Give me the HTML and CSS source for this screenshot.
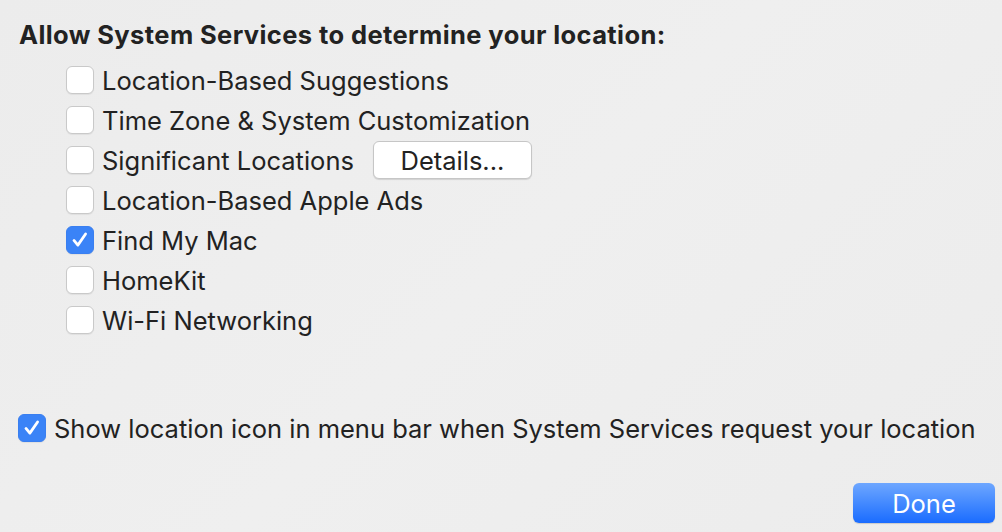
FILE: index.html
```html
<!DOCTYPE html>
<html lang="en">
<head>
  <title>System Services</title>
  <meta charset="utf-8">
  <link rel="stylesheet" href="styles.css">
</head>
<body>
  <div class="sheet">
    <h1 class="sheet-title">Allow System Services to determine your location:</h1>
    <ul class="service-list">
      <li class="service-row"><span class="check"></span>Location-Based Suggestions</li>
      <li class="service-row"><span class="check"></span>Time Zone &amp; System Customization</li>
      <li class="service-row"><span class="check"></span>Significant Locations<button class="push-button" type="button">Details...</button></li>
      <li class="service-row"><span class="check"></span>Location-Based Apple Ads</li>
      <li class="service-row"><span class="check checked"><svg viewBox="0 0 28 28"><path d="M7.5 14.5l4.2 5 8.3-12" /></svg></span>Find My Mac</li>
      <li class="service-row"><span class="check"></span>HomeKit</li>
      <li class="service-row"><span class="check"></span>Wi-Fi Networking</li>
    </ul>
    <div class="service-row menu-bar-row"><span class="check checked"><svg viewBox="0 0 28 28"><path d="M7.5 14.5l4.2 5 8.3-12" /></svg></span>Show location icon in menu bar when System Services request your location</div>
    <div class="sheet-toolbar">
      <button class="default-button" type="button">Done</button>
    </div>
  </div>
</body>
</html>
```

FILE: styles.css
```css
body {
  background-color: #ececec;
  color: #222222;
  font-family: "Inter", "Liberation Sans", sans-serif;
  margin: 0;
}

.sheet {
  background: linear-gradient(135deg, #ececec 0%, #efefef 50%, #ececec 100%);
  box-sizing: border-box;
  height: 532px;
  padding: 15px 7px 0 18px;
}

.sheet-title {
  font-size: 25.5px;
  font-weight: 700;
  letter-spacing: 0.4px;
  line-height: 40px;
  margin: 0 0 5px 1px;
}

.service-list {
  list-style: none;
  margin: 0;
  padding: 0 0 0 48px;
}

.service-row {
  align-items: center;
  display: flex;
  font-size: 25.5px;
  height: 40px;
}

.check {
  background-color: #ffffff;
  border: 1px solid #c9c9c9;
  border-radius: 6px;
  box-shadow: 0 1px 1px rgba(0, 0, 0, 0.06);
  box-sizing: border-box;
  display: flex;
  flex: none;
  height: 28px;
  margin-right: 8px;
  width: 28px;
}

.check.checked {
  background-color: #3a83f7;
  border-color: #3a7ff0;
}

.check svg {
  height: 100%;
  width: 100%;
}

.check path {
  fill: none;
  stroke: #ffffff;
  stroke-linecap: round;
  stroke-linejoin: round;
  stroke-width: 3;
}

.push-button {
  background-color: #ffffff;
  border: 1px solid #c6c6c6;
  border-radius: 6px;
  box-shadow: 0 1px 1px rgba(0, 0, 0, 0.12);
  color: #222222;
  font-family: inherit;
  font-size: 25.5px;
  height: 38px;
  margin-left: 19px;
  padding: 0;
  width: 159px;
}

.menu-bar-row {
  margin-top: 68px;
}

.sheet-toolbar {
  display: flex;
  justify-content: flex-end;
  margin-top: 35px;
}

.default-button {
  background: linear-gradient(#6ea7ff, #1a6cff);
  border: none;
  border-radius: 6px;
  box-shadow: 0 1px 1px rgba(0, 0, 0, 0.15);
  color: #ffffff;
  font-family: inherit;
  font-size: 25.5px;
  height: 40px;
  padding: 0;
  width: 142px;
}
```
